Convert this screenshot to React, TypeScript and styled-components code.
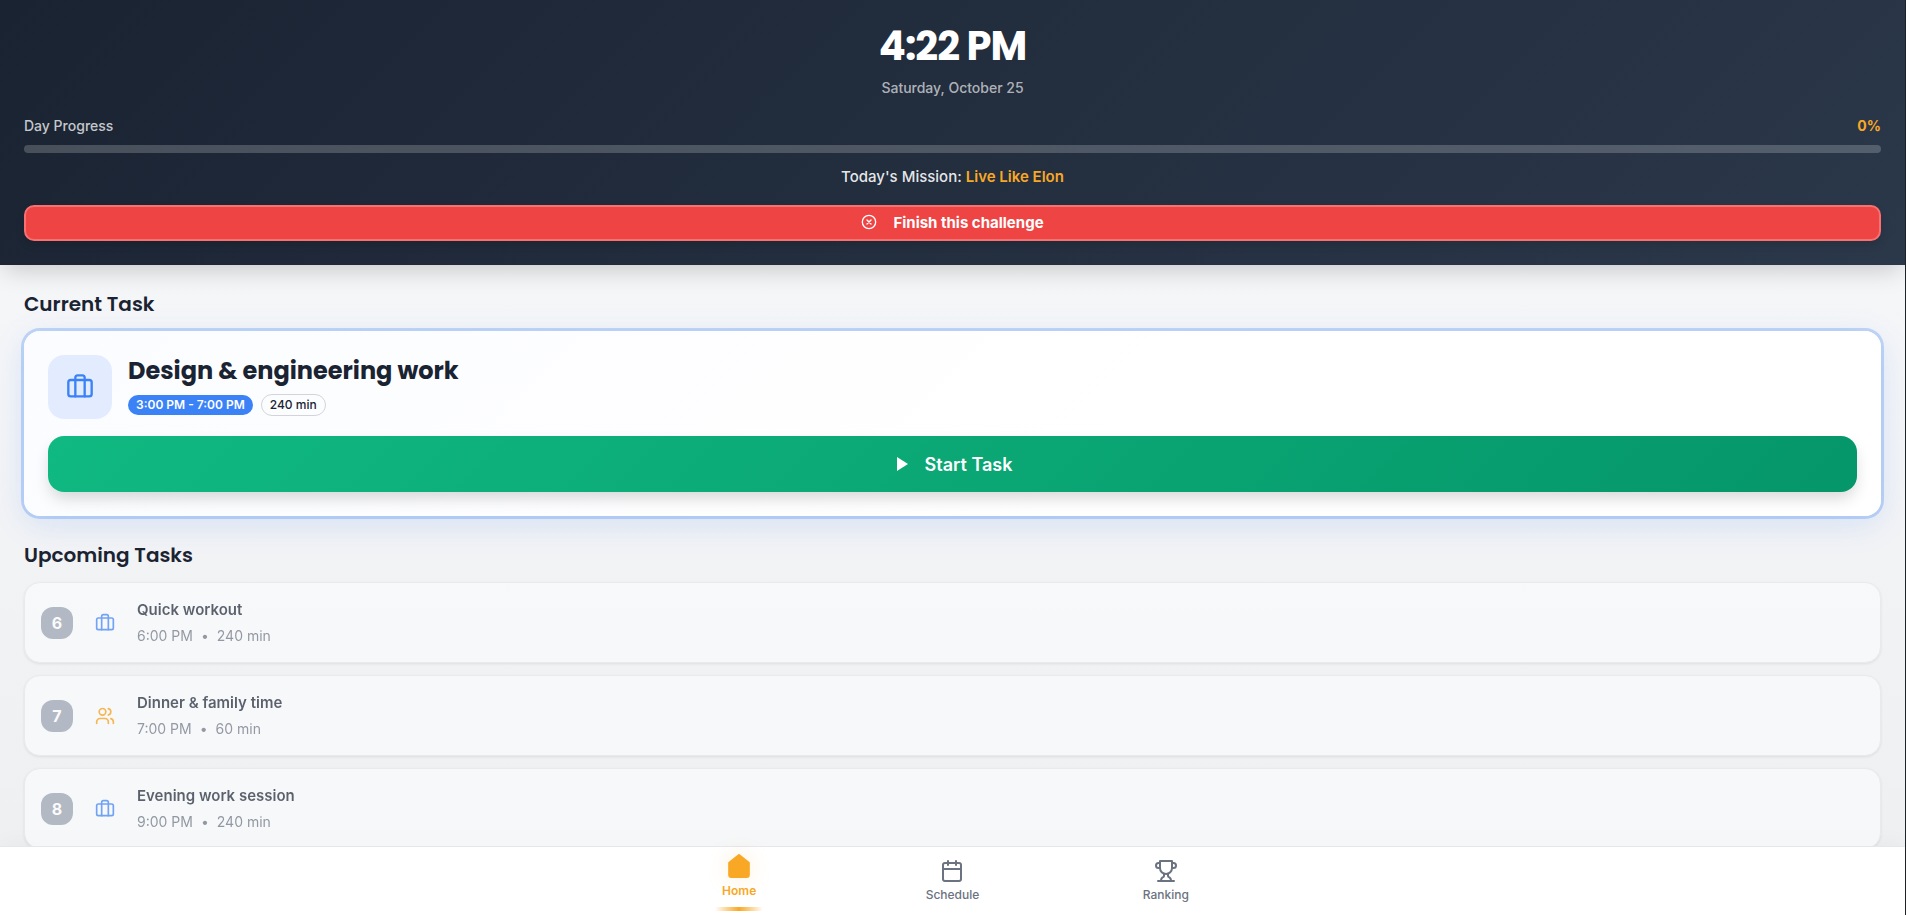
import React from 'react';
import styled, { createGlobalStyle } from 'styled-components';

const body = "Inter, 'Liberation Sans', sans-serif";
const display = "Poppins, Inter, 'Liberation Sans', sans-serif";

const GlobalStyle = createGlobalStyle`
  *, *::before, *::after { box-sizing: border-box; }
  html, body, #root { height: 100%; }
  body {
    margin: 0;
    overflow: hidden;
    font-family: ${body};
    font-size: 16px;
    line-height: 24px;
    color: #1a2332;
  }
  h1, h2, h3, p, ul { margin: 0; padding: 0; }
  button { font-family: inherit; border: 0; cursor: pointer; }
`;

const Shell = styled.div`
  display: flex;
  flex-direction: column;
  height: 100%;
  border-right: 1px solid #202327;
  background: linear-gradient(180deg, #f8f9fb 0%, #eeeff1 100%);
`;

const Header = styled.header`
  flex: none;
  display: flex;
  flex-direction: column;
  padding: 24px;
  background: linear-gradient(135deg, #1a2332 0%, #2b384a 100%);
  box-shadow: 0 8px 24px -4px rgba(0, 0, 0, 0.2);
  color: #fff;
`;

const Clock = styled.h1`
  font-family: ${display};
  font-size: 40px;
  font-weight: 700;
  line-height: 45px;
  letter-spacing: -1px;
  text-align: center;
`;

const DateLine = styled.p`
  margin-top: 8px;
  font-size: 14px;
  font-weight: 500;
  line-height: 22px;
  text-align: center;
  color: rgba(255, 255, 255, 0.65);
`;

const ProgressLabels = styled.div`
  display: flex;
  justify-content: space-between;
  margin: 16px 0 8px;
  font-size: 14px;
  font-weight: 500;
  line-height: 22px;
  color: rgba(255, 255, 255, 0.75);
`;

const Percent = styled.span`
  font-weight: 700;
  color: #f9a826;
`;

const Track = styled.div`
  height: 8px;
  border-radius: 4px;
  background: rgba(255, 255, 255, 0.2);
`;

const Mission = styled.p`
  margin: 12px 0 16px;
  font-size: 15px;
  font-weight: 500;
  text-align: center;
  color: rgba(255, 255, 255, 0.9);

  strong { font-weight: 600; color: #f9a826; }
`;

const FinishButton = styled.button`
  display: flex;
  align-items: center;
  justify-content: center;
  gap: 16px;
  height: 36px;
  padding: 0 0 2px;
  border: 2px solid #f87171;
  border-radius: 10px;
  background: #ef4444;
  box-shadow: 0 4px 8px rgba(0, 0, 0, 0.12);
  color: #fff;
  font-size: 15px;
  font-weight: 700;
`;

const Main = styled.main`
  flex: 1;
  min-height: 0;
  overflow: hidden;
  padding: 24px 24px 0;
`;

const SectionTitle = styled.h2`
  font-family: ${display};
  font-size: 20px;
  font-weight: 600;
  line-height: 30px;
`;

const CurrentCard = styled.section`
  display: flex;
  flex-direction: column;
  gap: 17px;
  margin: 12px 0 24px;
  padding: 24px;
  border-radius: 16px;
  background: linear-gradient(135deg, #fbfcff 0%, #ffffff 60%);
  box-shadow: 0 0 0 3px rgba(59, 130, 246, 0.28), 0 8px 32px rgba(59, 130, 246, 0.16);
`;

const TaskSummary = styled.div`
  display: flex;
  align-items: flex-start;
  gap: 16px;
`;

const TaskIcon = styled.div`
  display: grid;
  place-items: center;
  width: 64px;
  height: 64px;
  border-radius: 16px;
  background: #e3ecff;
  color: #3b82f6;
`;

const TaskName = styled.h3`
  font-family: ${display};
  font-size: 24px;
  font-weight: 700;
  line-height: 32px;
`;

const Badges = styled.div`
  display: flex;
  align-items: center;
  gap: 8px;
  margin-top: 7px;
`;

const Badge = styled.span<{ $outlined?: boolean }>`
  padding: 0 8px;
  border: ${p => (p.$outlined ? '1px solid #d1d5db' : '0')};
  border-radius: 11px;
  background: ${p => (p.$outlined ? 'transparent' : '#3b82f6')};
  color: ${p => (p.$outlined ? '#1a2332' : '#fff')};
  font-size: 12px;
  font-weight: ${p => (p.$outlined ? 500 : 600)};
  line-height: 20px;
`;

const StartButton = styled.button`
  display: flex;
  align-items: center;
  justify-content: center;
  gap: 16px;
  height: 56px;
  border-radius: 16px;
  background: linear-gradient(135deg, #10b981 0%, #059669 100%);
  box-shadow: 0 8px 16px -2px rgba(0, 0, 0, 0.16);
  color: #fff;
  font-size: 18px;
  font-weight: 600;
`;

const TaskList = styled.ul`
  display: flex;
  flex-direction: column;
  gap: 12px;
  margin-top: 12px;
  list-style: none;
`;

const TaskRow = styled.li`
  flex: none;
  display: flex;
  align-items: center;
  height: 81px;
  padding: 0 16px;
  border: 1px solid #e5e7eb;
  border-radius: 16px;
  background: #fafbfd;
  box-shadow: 0 1px 3px rgba(0, 0, 0, 0.12);
  opacity: 0.7;
`;

const Order = styled.span`
  display: grid;
  place-items: center;
  width: 32px;
  height: 32px;
  border-radius: 12px;
  background: #99a1af;
  color: #fff;
  font-weight: 700;
`;

const RowIcon = styled.span<{ $color: string }>`
  display: grid;
  place-items: center;
  width: 64px;
  color: ${p => p.$color};
`;

const RowName = styled.h3`
  font-size: 15px;
  font-weight: 600;
  line-height: 24px;
`;

const RowMeta = styled.p`
  display: flex;
  gap: 8px;
  margin-top: 2px;
  font-size: 14px;
  line-height: 24px;
  color: #6b7280;
`;

const BottomNav = styled.nav`
  flex: none;
  border-top: 1px solid #e5e7eb;
  background: #fff;
  box-shadow: 0 -4px 20px rgba(0, 0, 0, 0.03);
`;

const NavItems = styled.div`
  display: grid;
  grid-template-columns: repeat(3, 1fr);
  max-width: 640px;
  height: 68px;
  margin: 0 auto;
`;

const NavLink = styled.a<{ $active?: boolean }>`
  position: relative;
  display: flex;
  flex-direction: column;
  align-items: center;
  justify-content: center;
  gap: 2px;
  padding: ${p => (p.$active ? '0 0 8px' : '2px 0 0')};
  color: ${p => (p.$active ? '#f9a826' : '#6b7280')};
  font-size: 12px;
  font-weight: ${p => (p.$active ? 600 : 500)};
  line-height: 20px;
  text-decoration: none;

  svg { filter: ${p => (p.$active ? 'drop-shadow(0 0 10px rgba(249, 168, 38, 0.2))' : 'none')}; }
`;

const ActiveBar = styled.span`
  position: absolute;
  bottom: 4px;
  left: 50%;
  width: 48px;
  height: 4px;
  border-radius: 2px;
  transform: translateX(-50%);
  background: linear-gradient(90deg, transparent, #f9a826, transparent);
`;

type IconProps = { size: number; filled?: boolean; children: React.ReactNode };

const Icon = ({ size, filled, children }: IconProps) => (
  <svg width={size} height={size} viewBox="0 0 24 24" fill={filled ? 'currentColor' : 'none'}
    stroke="currentColor" strokeWidth={2} strokeLinecap="round" strokeLinejoin="round" aria-hidden="true">
    {children}
  </svg>
);

const Luggage = ({ size }: { size: number }) => (
  <Icon size={size}>
    <rect x="2" y="6" width="20" height="14" rx="2" />
    <path d="M16 20V4a2 2 0 0 0-2-2h-4a2 2 0 0 0-2 2v16" />
  </Icon>
);

const People = ({ size }: { size: number }) => (
  <Icon size={size}>
    <path d="M16 21v-2a4 4 0 0 0-4-4H6a4 4 0 0 0-4 4v2" />
    <circle cx="9" cy="7" r="4" />
    <path d="M22 21v-2a4 4 0 0 0-3-3.870M16 3.130a4 4 0 0 1 0 7.750" />
  </Icon>
);

const upcoming = [
  { order: 6, name: 'Quick workout', time: '6:00 PM', length: '240 min', icon: Luggage, color: '#3b82f6' },
  { order: 7, name: 'Dinner & family time', time: '7:00 PM', length: '60 min', icon: People, color: '#f59e0b' },
  { order: 8, name: 'Evening work session', time: '9:00 PM', length: '240 min', icon: Luggage, color: '#3b82f6' },
];

export default function App() {
  return (
    <Shell>
      <GlobalStyle />
      <Header>
        <Clock>4:22 PM</Clock>
        <DateLine>Saturday, October 25</DateLine>
        <ProgressLabels>
          <span id="day-progress">Day Progress</span>
          <Percent>0%</Percent>
        </ProgressLabels>
        <Track role="progressbar" aria-labelledby="day-progress" aria-valuenow={0} aria-valuemin={0} aria-valuemax={100} />
        <Mission>Today's Mission: <strong>Live Like Elon</strong></Mission>
        <FinishButton type="button">
          <Icon size={16}>
            <circle cx="12" cy="12" r="10" />
            <path d="m15 9-6 6M9 9l6 6" />
          </Icon>
          Finish this challenge
        </FinishButton>
      </Header>

      <Main>
        <SectionTitle>Current Task</SectionTitle>
        <CurrentCard>
          <TaskSummary>
            <TaskIcon><Luggage size={28} /></TaskIcon>
            <div>
              <TaskName>Design &amp; engineering work</TaskName>
              <Badges>
                <Badge>3:00 PM - 7:00 PM</Badge>
                <Badge $outlined>240 min</Badge>
              </Badges>
            </div>
          </TaskSummary>
          <StartButton type="button">
            <svg width="16" height="16" viewBox="0 0 16 16" aria-hidden="true">
              <path d="M4 1l11 7-11 7z" fill="currentColor" />
            </svg>
            Start Task
          </StartButton>
        </CurrentCard>

        <SectionTitle>Upcoming Tasks</SectionTitle>
        <TaskList>
          {upcoming.map(task => (
            <TaskRow key={task.order}>
              <Order>{task.order}</Order>
              <RowIcon $color={task.color}><task.icon size={20} /></RowIcon>
              <div>
                <RowName>{task.name}</RowName>
                <RowMeta><span>{task.time}</span><span>•</span><span>{task.length}</span></RowMeta>
              </div>
            </TaskRow>
          ))}
        </TaskList>
      </Main>

      <BottomNav>
        <NavItems>
          <NavLink href="#home" $active>
            <Icon size={26} filled>
              <path d="m3 9 9-7 9 7v11a2 2 0 0 1-2 2H5a2 2 0 0 1-2-2z" />
            </Icon>
            Home
            <ActiveBar />
          </NavLink>
          <NavLink href="#schedule">
            <Icon size={24}>
              <rect x="3" y="4" width="18" height="18" rx="2" />
              <path d="M16 2v4M8 2v4M3 10h18" />
            </Icon>
            Schedule
          </NavLink>
          <NavLink href="#ranking">
            <Icon size={24}>
              <path d="M6 9H4.500a2.500 2.500 0 0 1 0-5H6M18 9h1.500a2.500 2.500 0 0 0 0-5H18M4 22h16" />
              <path d="M10 14.660V17c0 .550-.470.980-.970 1.210C7.850 18.750 7 20.240 7 22M14 14.660V17c0 .550.470.980.970 1.210C16.150 18.750 17 20.240 17 22" />
              <path d="M18 2H6v7a6 6 0 0 0 12 0V2Z" />
            </Icon>
            Ranking
          </NavLink>
        </NavItems>
      </BottomNav>
    </Shell>
  );
}
